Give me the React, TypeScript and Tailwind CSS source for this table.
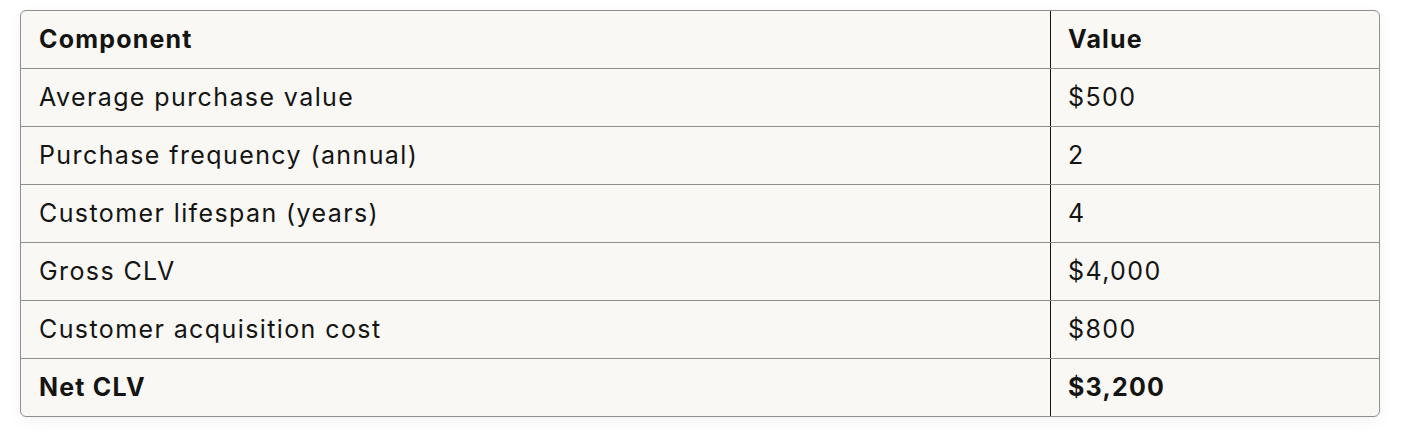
import React from 'react';

interface Row {
  label: string;
  value: string;
  bold?: boolean;
}

const rows: Row[] = [
  { label: 'Average purchase value', value: '$500' },
  { label: 'Purchase frequency (annual)', value: '2' },
  { label: 'Customer lifespan (years)', value: '4' },
  { label: 'Gross CLV', value: '$4,000' },
  { label: 'Customer acquisition cost', value: '$800' },
  { label: 'Net CLV', value: '$3,200', bold: true },
];

const App: React.FC = () => {
  return (
    <div className="w-[1416px] h-[432px] bg-white pt-[10px] pl-[20px] font-['Inter',sans-serif] text-[#141413]">
      <div className="w-[1360px] rounded-[6px] border border-[#8f8f8c] bg-[#f9f8f5] overflow-hidden shadow-[0_4px_14px_rgba(0,0,0,0.05)]">
        <div className="grid grid-cols-[1029px_1fr] h-[57px] items-center">
          <div className="pl-[18px] text-[25px] font-bold tracking-[1.2px]">Component</div>
          <div className="h-full flex items-center pl-[17px] border-l border-[#141413] text-[25px] font-bold tracking-[1.2px]">Value</div>
        </div>
        {rows.map((row) => (
          <div key={row.label} className="grid grid-cols-[1029px_1fr] h-[58px] border-t border-[#8f8f8c]">
            <div className={`flex items-center pl-[18px] text-[25px] ${row.bold ? 'font-bold tracking-[1.2px]' : 'font-normal tracking-[1.4px]'}`}>
              {row.label}
            </div>
            <div className={`flex items-center pl-[17px] border-l border-[#141413] text-[25px] ${row.bold ? 'font-bold tracking-[1.2px]' : 'font-normal tracking-[1.4px]'}`}>
              {row.value}
            </div>
          </div>
        ))}
      </div>
    </div>
  );
};

export default App;
